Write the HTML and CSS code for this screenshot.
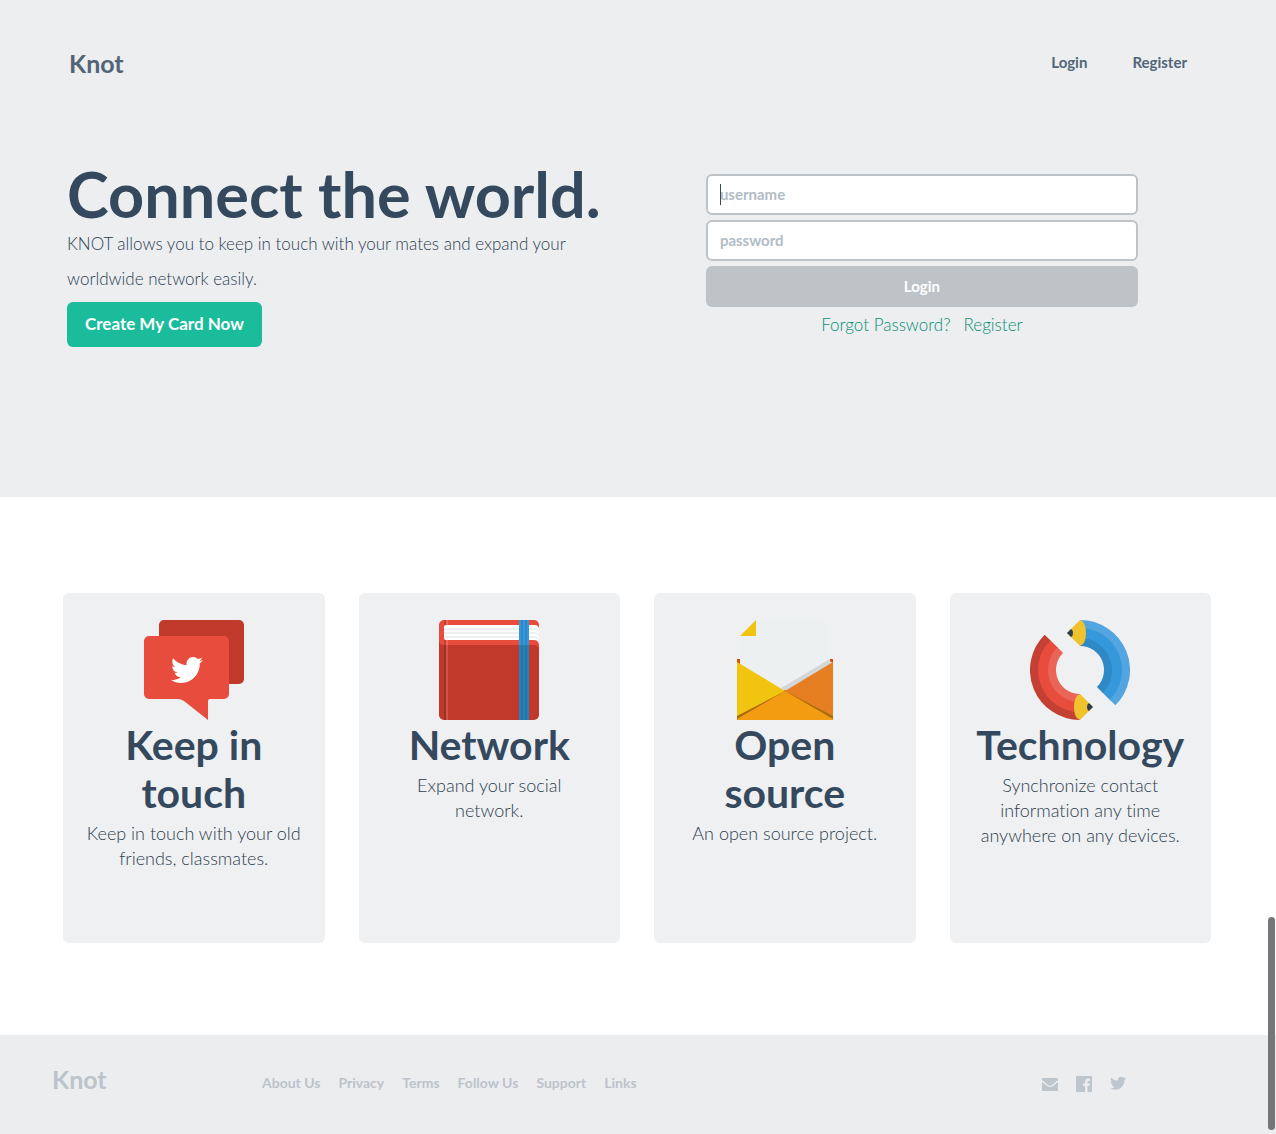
FILE: index.html
```html
<!DOCTYPE html>
<html lang="en">
<head>
<meta charset="utf-8">
<meta name="viewport" content="width=device-width, initial-scale=1">
<title>Knot</title>
<link rel="stylesheet" href="styles.css">
</head>
<body>
<svg class="defs" aria-hidden="true">
  <symbol id="bird" viewBox="0 0 24 24"><path d="M23.954 4.569c-.885.389-1.83.654-2.825.775 1.014-.611 1.794-1.574 2.163-2.723-.951.555-2.005.959-3.127 1.184-.896-.959-2.173-1.559-3.591-1.559-2.717 0-4.92 2.203-4.92 4.917 0 .39.045.765.127 1.124C7.691 8.094 4.066 6.13 1.64 3.161c-.427.722-.666 1.561-.666 2.475 0 1.71.87 3.213 2.188 4.096-.807-.026-1.566-.248-2.228-.616v.061c0 2.385 1.693 4.374 3.946 4.827-.413.111-.849.171-1.296.171-.314 0-.615-.03-.916-.086.631 1.953 2.445 3.377 4.604 3.417-1.68 1.319-3.809 2.105-6.102 2.105-.39 0-.779-.023-1.17-.067 2.189 1.394 4.768 2.209 7.557 2.209 9.054 0 13.999-7.496 13.999-13.986 0-.209 0-.42-.015-.63.961-.689 1.8-1.56 2.46-2.548z"/></symbol>
</svg>

<header class="hero">
  <nav class="nav">
    <a class="brand" href="#">Knot</a>
    <div class="nav-links">
      <a href="#">Login</a>
      <a href="#">Register</a>
    </div>
  </nav>
  <div class="hero-body">
    <div class="pitch">
      <h1>Connect the world.</h1>
      <p>KNOT allows you to keep in touch with your mates and expand your <br>worldwide network easily.</p>
      <button class="create" type="button">Create My Card Now</button>
    </div>
    <form class="login">
      <div class="field">
        <input type="text" placeholder="username" aria-label="username">
        <span class="caret"></span>
      </div>
      <div class="field">
        <input type="password" placeholder="password" aria-label="password">
      </div>
      <button class="submit" type="button">Login</button>
      <div class="login-links">
        <a href="#">Forgot Password?</a>
        <a href="#">Register</a>
      </div>
    </form>
  </div>
</header>

<main class="cards">
  <section class="card">
    <svg class="picture" viewBox="0 0 100 100" aria-hidden="true">
      <rect x="15" width="85" height="64" rx="5" fill="#c0392b"/>
      <path d="M5 16h75a5 5 0 0 1 5 5v53a5 5 0 0 1-5 5H66q-2 0-2 2v19L40 81q-3-2-6-2H5a5 5 0 0 1-5-5V21a5 5 0 0 1 5-5z" fill="#e74c3c"/>
      <use href="#bird" x="27" y="34" width="32" height="32" fill="#fff"/>
    </svg>
    <h2>Keep in touch</h2>
    <p>Keep in touch with your old friends, classmates.</p>
  </section>
  <section class="card">
    <svg class="picture" viewBox="0 0 100 100" aria-hidden="true">
      <path d="M5 0h90a5 5 0 0 1 5 5v25H0V5a5 5 0 0 1 5-5z" fill="#e74c3c"/>
      <path d="M7 5h88q5 0 5 4v15q-1-4-5-4H7q-2 0-2-2V7q0-2 2-2z" fill="#fff"/>
      <path d="M5 9h90q3 0 5 2M5 13h90q3 0 5 2M5 17h90q3 0 5 2" fill="none" stroke="#e9ebec" stroke-width="1.5"/>
      <path d="M0 20q0 5 5 5h90q5 0 5 5v65a5 5 0 0 1-5 5H5a5 5 0 0 1-5-5z" fill="#c0392b"/>
      <path d="M5 0h2v5H5zM5 20h2v80H5z" fill="#000" opacity=".16"/>
      <path d="M7 0h2v5H7zM7 20h2v80H7z" fill="#fff" opacity=".16"/>
      <path d="M80 0h10v25H80z" fill="#3498db"/>
      <path d="M80 25h10v75H80z" fill="#2980b9"/>
      <path d="M82 0h2v100h-2zM86 0h2v100h-2z" fill="#154a7a" opacity=".2"/>
    </svg>
    <h2>Network</h2>
    <p>Expand your social <br>network.</p>
  </section>
  <section class="card">
    <svg class="picture" viewBox="0 0 100 100" aria-hidden="true">
      <path d="M2 39h4v5H2zM94 39h4v5h-4z" fill="#d35400"/>
      <path d="M21 0h74v50L50 72 5 50V16z" fill="#ecf0f1"/>
      <path d="M95 39 46 68l4 3 48-28-3-2z" fill="#d3d7d8"/>
      <path d="M21 0v16H5z" fill="#f1c40f"/>
      <path d="M2 95 50 70 98 95v5H2z" fill="#a96b0d"/>
      <path d="M2 42 50 71 2 96z" fill="#f1c40f"/>
      <path d="M98 42 50 71l48 25z" fill="#e67e22"/>
      <path d="M2 99 50 71l48 28v1H2z" fill="#f39c12"/>
    </svg>
    <h2>Open source</h2>
    <p>An open source project.</p>
  </section>
  <section class="card">
    <svg class="picture" viewBox="0 0 100 100" aria-hidden="true">
      <g fill="none">
        <path d="M50 13A37 37 0 0 1 76.16 76.16" stroke="#3498db" stroke-width="12"/>
        <path d="M50 4A46 46 0 0 1 82.53 82.53" stroke="#52a5e0" stroke-width="8"/>
        <path d="M50 22A28 28 0 0 1 69.8 69.8" stroke="#2e89c5" stroke-width="8"/>
      </g>
      <path id="tip" d="M50 0q6 2 6 13t-6 13L37 13z" fill="#efc22e"/>
      <path id="lead" d="M41 9q2 1 2 4t-2 4l-4-4z" fill="#2c3e50"/>
      <g transform="rotate(180 50 50)">
        <g fill="none">
          <path d="M50 13A37 37 0 0 1 76.16 76.16" stroke="#e74c3c" stroke-width="12"/>
          <path d="M50 4A46 46 0 0 1 82.53 82.53" stroke="#c34033" stroke-width="8"/>
          <path d="M50 22A28 28 0 0 1 69.8 69.8" stroke="#ea6558" stroke-width="8"/>
        </g>
        <use href="#tip"/>
        <use href="#lead"/>
      </g>
    </svg>
    <h2>Technology</h2>
    <p>Synchronize contact information any time anywhere on any devices.</p>
  </section>
</main>

<footer class="footer">
  <a class="footer-brand" href="#">Knot</a>
  <nav class="footer-links">
    <a href="#">About Us</a>
    <a href="#">Privacy</a>
    <a href="#">Terms</a>
    <a href="#">Follow Us</a>
    <a href="#">Support</a>
    <a href="#">Links</a>
  </nav>
  <div class="social">
    <a href="#" aria-label="Mail"><svg viewBox="0 0 16 16"><path d="M0 3q0-1 1-1h14q1 0 1 1v1l-6 5q-2 1-4 0L0 4zM0 6l5 4q3 2 6 0l5-4v8q0 1-1 1H1q-1 0-1-1z"/></svg></a>
    <a href="#" aria-label="Facebook"><svg viewBox="0 0 16 16"><path d="M1 0h14q1 0 1 1v14q0 1-1 1h-3.500v-6h2l.3-2.400h-2.300V6.200q0-1.200 1.200-1.200h1.300V2.600h-2Q9 2.600 9 5.600v2H7V10h2v6H1q-1 0-1-1V1q0-1 1-1z"/></svg></a>
    <a href="#" aria-label="Twitter"><svg viewBox="0 1 24 24"><use href="#bird" width="24" height="24"/></svg></a>
  </div>
</footer>
<div class="scroll-thumb"></div>
</body>
</html>
```
FILE: styles.css
```css
* {
  box-sizing: border-box;
}

body {
  margin: 0;
  min-height: 100vh;
  display: flex;
  flex-direction: column;
  background: #fff;
  color: #34495e;
  font-family: Lato, "Liberation Sans", sans-serif;
  font-size: 17px;
  font-weight: 300;
  font-variant-ligatures: none;
}

a {
  color: inherit;
  text-decoration: none;
}

h1,
h2,
p {
  margin: 0;
}

input,
button {
  font-family: inherit;
  border-radius: 6px;
}

.defs {
  position: absolute;
  width: 0;
  height: 0;
}

.hero {
  padding: 47px 65px 150px 63px;
  background: #eceef0;
}

.nav {
  display: flex;
  justify-content: space-between;
  padding: 0 24px 0 6px;
  line-height: 32px;
  font-weight: 700;
  color: #526577;
}

.brand {
  font-size: 25px;
}

.nav-links {
  display: flex;
  gap: 45px;
  font-size: 15px;
  line-height: 30px;
}

.hero-body {
  display: grid;
  grid-template-columns: 56% 1fr;
  padding-top: 81px;
}

.pitch {
  padding-left: 4px;
}

.pitch h1 {
  padding-top: 2px;
  font-size: 63px;
  line-height: 64px;
  font-weight: 700;
}

.pitch p {
  color: #2c3e50;
  line-height: 35px;
}

.create {
  height: 45px;
  margin-top: 6px;
  padding: 0 18px 2px;
  border: 0;
  background: #1abc9c;
  color: #fff;
  font-size: 17px;
  font-weight: 700;
}

.login {
  display: flex;
  flex-direction: column;
  gap: 5px;
  max-width: 432px;
  padding-top: 14px;
}

.field {
  position: relative;
  display: flex;
}

.field input {
  width: 100%;
  height: 41px;
  padding: 0 12px 2px;
  border: 2px solid #bdc3c7;
  background: #fff;
  color: #34495e;
  font-size: 15px;
}

.field input::placeholder {
  color: #b2bcc5;
  font-weight: 700;
  opacity: 1;
}

.caret {
  position: absolute;
  left: 14px;
  top: 10px;
  width: 1px;
  height: 21px;
  background: #34495e;
}

.submit {
  height: 41px;
  padding: 0 12px 2px;
  border: 0;
  background: #bdc3c7;
  color: #fff;
  font-size: 15px;
  font-weight: 700;
}

.login-links {
  display: flex;
  justify-content: center;
  gap: 13px;
  line-height: 26px;
  color: #068f72;
}

.cards {
  display: grid;
  grid-template-columns: repeat(4, 1fr);
  gap: 34px;
  padding: 96px 65px 92px 63px;
}

.card {
  min-height: 350px;
  padding: 27px 20px;
  border-radius: 6px;
  background: #eff0f2;
  text-align: center;
}

.picture {
  display: block;
  width: 100px;
  height: 100px;
  margin: 0 auto 1px;
}

.card h2 {
  margin-bottom: 4px;
  font-size: 41px;
  line-height: 48px;
  font-weight: 700;
}

.card p {
  color: #2c3e50;
  font-size: 18px;
  line-height: 25px;
}

.footer {
  flex: 1;
  display: flex;
  align-items: flex-start;
  padding: 28px 150px 30px 52px;
  background: #ebedee;
  color: #bdc3cb;
  font-weight: 700;
  line-height: 32px;
}

.footer-brand {
  width: 210px;
  font-size: 25px;
}

.footer-links {
  display: flex;
  gap: 18px;
  padding-top: 4px;
  font-size: 14px;
}

.social {
  display: flex;
  gap: 18px;
  margin-left: auto;
  padding-top: 13px;
}

.social svg {
  display: block;
  width: 16px;
  height: 16px;
  fill: #bdc5cd;
}

.scroll-thumb {
  position: fixed;
  right: 1px;
  bottom: 4px;
  width: 7px;
  height: 213px;
  border-radius: 4px;
  background: #747678;
}
```
